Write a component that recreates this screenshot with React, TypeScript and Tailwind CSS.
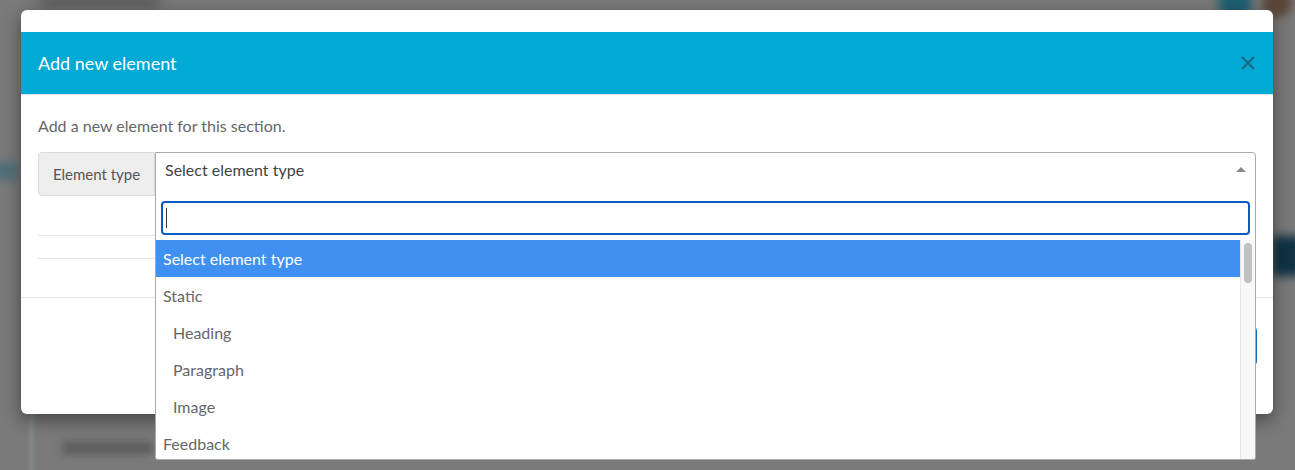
const options = [
  { label: 'Select element type', level: 0, active: true },
  { label: 'Static', level: 0 },
  { label: 'Heading', level: 1 },
  { label: 'Paragraph', level: 1 },
  { label: 'Image', level: 1 },
  { label: 'Feedback', level: 0 },
];

export default function App() {
  return (
    <div className="relative h-[470px] w-full overflow-hidden bg-[#7a7a7a] font-['Lato','Liberation_Sans',sans-serif]">
      {/* blurred page behind the overlay */}
      <div className="absolute left-[40px] top-[-6px] h-[14px] w-[120px] rounded bg-[#5c5c5c] blur-[6px]" />
      <div className="absolute left-[1218px] top-[-12px] h-[30px] w-[34px] rounded-full bg-[#1d5f72] blur-[5px]" />
      <div className="absolute left-[1262px] top-[-12px] h-[30px] w-[30px] rounded-full bg-[#5a4638] blur-[5px]" />
      <div className="absolute left-[-8px] top-[162px] h-[18px] w-[26px] rounded bg-[#4e6f78] blur-[5px]" />
      <div className="absolute left-[1272px] top-[236px] h-[40px] w-[30px] rounded bg-[#0f3244] blur-[5px]" />
      <div className="absolute left-[62px] top-[442px] h-[12px] w-[90px] rounded bg-[#5a5a5a] blur-[4px]" />
      <div className="absolute left-[30px] top-[414px] h-[60px] w-[3px] bg-[#8a9599] blur-[2px]" />

      {/* modal */}
      <div className="relative ml-[21px] mt-[10px] w-[1252px] rounded-[6px] bg-white shadow-[0_6px_18px_rgba(0,0,0,0.45)]">
        <div className="h-[22px]" />
        <div className="flex h-[63px] items-center justify-between border-b border-[#e3e3e3] bg-[#00aad5] pl-[17px] pr-[17px]">
          <h2 className="text-[18px] leading-none text-white">Add new element</h2>
          <svg viewBox="0 0 16 16" className="h-[16px] w-[16px]" fill="none" stroke="#1a6a80" strokeWidth={2.2}>
            <path d="M2 2l12 12M14 2L2 14" />
          </svg>
        </div>

        <div className="px-[17px] pt-[20px]">
          <p className="text-[16px] leading-[22px] text-[#666]">Add a new element for this section.</p>

          <div className="mt-[15px] flex h-[44px]">
            <div className="flex w-[117px] items-center justify-center rounded-l-[4px] border border-[#dcdcdc] bg-[#eeeeee] text-[15px] text-[#555]">
              Element type
            </div>
            <div className="relative flex-1 rounded-tr-[4px] border border-[#aaa] bg-white">
              <div className="flex items-start justify-between pl-[9px] pr-[9px] pt-[4px]">
                <span className="text-[16px] leading-[26px] text-[#444]">Select element type</span>
                <span className="mt-[10px] h-0 w-0 border-x-[5px] border-b-[5px] border-x-transparent border-b-[#888]" />
              </div>

              {/* open dropdown */}
              <div className="absolute left-[-1px] right-[-1px] top-full z-10 h-[265px] overflow-hidden rounded-b-[3px] border border-t-0 border-[#aaa] bg-white">
                <div className="px-[5px] pb-[5px] pt-[6px]">
                  <div className="flex h-[34px] items-center rounded-[4px] border-2 border-[#0a5cc2] bg-white px-[3px]">
                    <span className="h-[20px] w-px bg-[#333]" />
                  </div>
                </div>
                <div className="flex">
                  <ul className="flex-1">
                    {options.map((o) => (
                      <li
                        key={o.label}
                        className={`flex h-[37px] items-center text-[16px] ${
                          o.level ? 'pl-[17px]' : 'pl-[7px]'
                        } ${o.active ? 'bg-[#3f90f0] text-white' : 'text-[#666]'}`}
                      >
                        {o.label}
                      </li>
                    ))}
                  </ul>
                  <div className="w-[15px] border-l border-[#e6e6e6] bg-[#f8f8f8] pt-[3px]">
                    <div className="ml-[3px] h-[40px] w-[8px] rounded-full bg-[#c1c1c1]" />
                  </div>
                </div>
              </div>
            </div>
          </div>

          <div className="mt-[39px] border-t border-[#e5e5e5]" />
          <div className="mt-[22px] border-t border-[#e5e5e5]" />
          <div className="h-[38px]" />
        </div>

        <div className="flex h-[117px] items-start justify-end border-t border-[#e5e5e5] px-[16px] pt-[29px]">
          <button className="h-[38px] rounded-[4px] bg-[#0d6fb8] px-[18px] text-[15px] text-white">Add element</button>
        </div>
      </div>
    </div>
  );
}
